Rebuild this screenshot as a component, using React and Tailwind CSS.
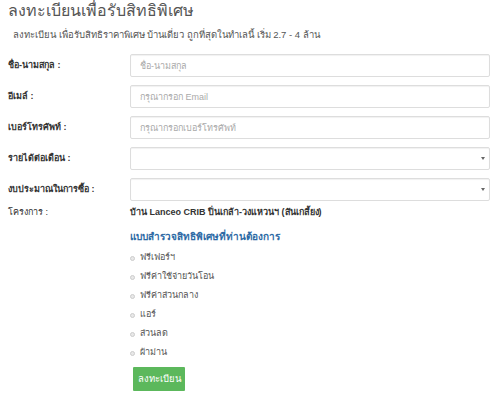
import React from 'react';

const fields = [
  { label: 'ชื่อ-นามสกุล :', placeholder: 'ชื่อ-นามสกุล', type: 'input' },
  { label: 'อีเมล์ :', placeholder: 'กรุณากรอก Email', type: 'input' },
  { label: 'เบอร์โทรศัพท์ :', placeholder: 'กรุณากรอกเบอร์โทรศัพท์', type: 'input' },
  { label: 'รายได้ต่อเดือน :', type: 'select' },
  { label: 'งบประมาณในการซื้อ :', type: 'select' },
];

const perks = ['ฟรีเฟอร์ฯ', 'ฟรีค่าใช้จ่ายวันโอน', 'ฟรีค่าส่วนกลาง', 'แอร์', 'ส่วนลด', 'ผ้าม่าน'];

export default function App() {
  return (
    <div className="w-[500px] h-[396px] overflow-hidden bg-white text-[#333] font-['Liberation_Sans',sans-serif]">
      {/* Header */}
      <div className="px-[8px]">
        <h1 className="text-[16px] leading-[22px] text-[#555]">ลงทะเบียนเพื่อรับสิทธิพิเศษ</h1>
        <p className="pl-[5px] mt-[7px] text-[9.5px] leading-[12px] text-[#555]">
          ลงทะเบียน เพื่อรับสิทธิราคาพิเศษ บ้านเดี่ยว ถูกที่สุดในทำเลนี้ เริ่ม 2.7 - 4 ล้าน
        </p>
      </div>

      {/* Form rows */}
      <div className="mt-[13px] flex flex-col gap-[8px] pr-[10px]">
        {fields.map((f) => (
          <div key={f.label} className="flex items-center">
            <label className="w-[130px] pl-[8px] text-[9px] font-semibold">{f.label}</label>
            <div className="flex-1 relative h-[23px] border border-[#ddd] rounded-[2px] shadow-[inset_0_1px_1px_rgba(0,0,0,0.06)]">
              {f.placeholder && (
                <span className="absolute left-[9px] top-[5px] text-[9px] leading-[12px] text-[#aaa]">{f.placeholder}</span>
              )}
              {f.type === 'select' && (
                <span className="absolute right-[4px] top-[9px] w-0 h-0 border-l-[2px] border-r-[2px] border-t-[3px] border-l-transparent border-r-transparent border-t-[#666]" />
              )}
            </div>
          </div>
        ))}
      </div>

      <div className="mt-[5px] flex items-center h-[14px]">
        <span className="w-[130px] pl-[8px] text-[9px]">โครงการ :</span>
        <span className="text-[9px] font-semibold">บ้าน Lanceo CRIB ปิ่นเกล้า-วงแหวนฯ (สันเกลี้ยง)</span>
      </div>

      {/* Survey */}
      <div className="pl-[130px] mt-[10px]">
        <h2 className="text-[10px] leading-[14px] font-semibold text-[#2d6aa5]">แบบสำรวจสิทธิพิเศษที่ท่านต้องการ</h2>
        <div className="mt-[8px] flex flex-col gap-[7px]">
          {perks.map((p) => (
            <div key={p} className="flex items-center gap-[5px] h-[12px]">
              <span className="w-[5px] h-[5px] rounded-full border border-[#ccc] bg-[#e8e8e8]" />
              <span className="text-[9px] text-[#555]">{p}</span>
            </div>
          ))}
        </div>
        <button className="mt-[8px] ml-[3px] w-[52px] h-[24px] bg-[#5cb85c] text-white text-[9.5px] rounded-[1px]">
          ลงทะเบียน
        </button>
      </div>
    </div>
  );
}
